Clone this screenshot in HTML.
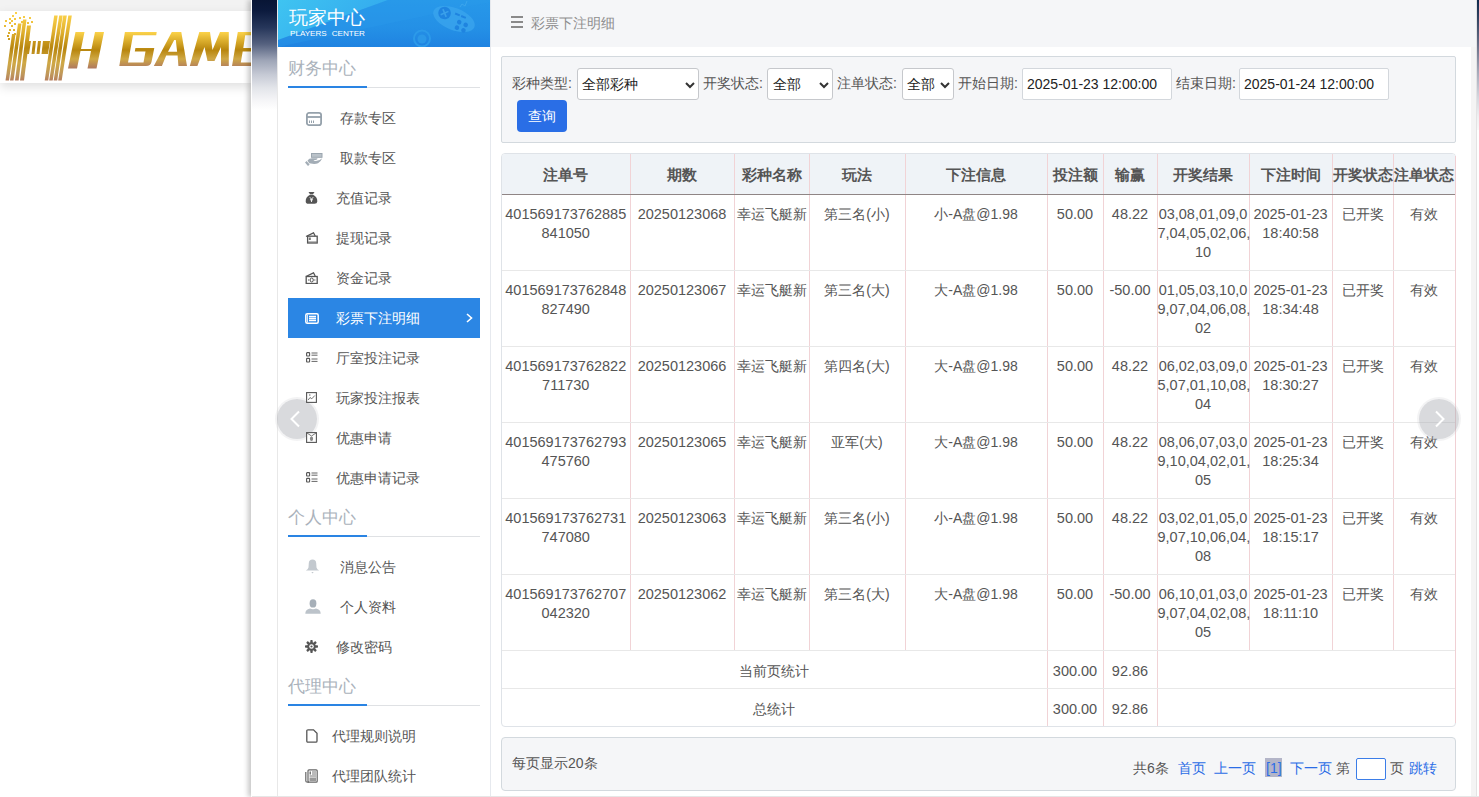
<!DOCTYPE html>
<html><head><meta charset="utf-8">
<style>
*{box-sizing:border-box;margin:0;padding:0}
html,body{width:1479px;height:797px;overflow:hidden;background:#fff;font-family:"Liberation Sans",sans-serif;color:#555;font-size:14px}
.abs{position:absolute}
#topstrip{left:0;top:0;width:251px;height:11px;background:#f2f2f2}
#logobar{left:0;top:11px;width:251px;height:72px;background:#fff;box-shadow:0 4px 10px rgba(0,0,0,.13)}
#panel{left:251px;top:0;width:1228px;height:797px;background:#fff;box-shadow:-3px 0 5px rgba(0,0,0,.22)}
#dark{left:252px;top:0;width:25px;height:110px;background:linear-gradient(#081535 0%,#0c1b3e 10%,#26365a 25%,#55617f 40%,#9ea5b7 55%,#c6cad5 68%,#e3e5ea 80%,#f6f6f8 92%,#fff 100%)}
#vline{left:277px;top:0;width:1px;height:797px;background:#e8e8e8}
#sidebar{left:278px;top:0;width:213px;height:797px;background:#fff;border-right:1px solid #e6e9ee}
#sbhead{left:278px;top:0;width:212px;height:47px;background:linear-gradient(90deg,#36b4ee 0%,#2a98e8 40%,#2690e6 70%,#2489e4 100%);overflow:hidden}
#sbhead .t1{position:absolute;left:11px;top:7px;color:#fff;font-size:19px;line-height:22px}
#sbhead .t2{position:absolute;left:12px;top:29px;color:#fff;font-size:8.1px;line-height:9px;word-spacing:2.7px}
.sec{position:absolute;left:288px;width:192px;height:2px}
.sec .tt{position:absolute;left:0;bottom:9px;font-size:17px;line-height:20px;color:#aab2bb;white-space:nowrap}
.sec .ul{position:absolute;left:0;top:0;width:79px;height:2px;background:#2a84e3}
.sec .gl{position:absolute;left:79px;top:1px;width:113px;height:1px;background:#dfe1e4}
.item{position:absolute;left:288px;width:192px;height:40px;line-height:40px;font-size:14px;color:#555}
.item svg{position:absolute}
.item .tx{position:absolute;top:0;white-space:nowrap}
.item.on{background:#2b86e4;color:#fff}
#mhead{left:491px;top:0;width:985px;height:47px;background:#f5f6f8}
#gutter{left:1471px;top:47px;width:5px;height:750px;background:#f4f4f4}
#rline{left:1476px;top:0;width:1px;height:797px;background:#e3e3e3}
#rdark{left:1477px;top:0;width:2px;height:130px;background:linear-gradient(#0e2a4e 0%,#2c3f5e 12%,#6a7088 35%,#a5a8b8 55%,#d5d6de 75%,#f0f0f2 90%,#f8f8f8 100%)}
#botline{left:252px;top:796px;width:1227px;height:1px;background:#e6e6e6}
#filter{left:501px;top:56px;width:955px;height:87px;background:#f5f6f8;border:1px solid #d3d9de;border-radius:2px}
.lbl{position:absolute;font-size:14px;color:#555;line-height:20px;top:73px;white-space:nowrap}
.sel{position:absolute;top:68px;height:32px;background:#fff;border:1px solid #c6c8cc;border-radius:3px;font-size:14px;color:#222;line-height:30px;padding-left:4px}
.sel svg{position:absolute;top:12px}
.inp{position:absolute;top:68px;height:32px;background:#fff;border:1px solid #d3d7dc;border-radius:2px;font-size:14px;color:#222;line-height:30px;padding-left:4px}
#btn{left:517px;top:100px;width:50px;height:32px;background:#2a6ee6;border-radius:4px;color:#fff;font-size:14px;line-height:32px;text-align:center}
#tbl{left:501px;top:153px;width:955px;height:574px;border:1px solid #dfe3e8;border-radius:4px;overflow:hidden}
table{border-collapse:collapse;table-layout:fixed;width:953px}
th{height:40px;background:#eff3f7;font-weight:bold;font-size:15px;color:#555;border-right:1px solid #f1d3d6;border-bottom:1px solid #8f8585;text-align:center;white-space:nowrap;padding:3px 0 0 0}
td{height:76px;vertical-align:top;text-align:center;font-size:14.5px;color:#555;line-height:19px;padding:10px 0 0 0;border-right:1px solid #f1d3d6;border-bottom:1px solid #e8e8e8;white-space:nowrap}
td .c{font-size:14px}
th:last-child,td:last-child{border-right:none}
tr.sum td{height:38px;line-height:20px;padding:3px 0 0 0;vertical-align:middle}
#foot{left:501px;top:737px;width:955px;height:54px;background:#f5f6f8;border:1px solid #d3d9de;border-radius:4px}
.circ{position:absolute;width:40px;height:40px;border-radius:50%;background:rgba(165,167,174,.42);box-shadow:0 0 0 2px rgba(200,200,206,.22)}
.pg{position:absolute;top:758px;font-size:14px;line-height:20px;white-space:nowrap;color:#555}
.pg.b{color:#2b6de6}
</style></head>
<body>
<div id="topstrip" class="abs"></div>
<div id="logobar" class="abs">
<svg width="251" height="72" viewBox="0 11 251 72" style="position:absolute;left:0;top:0">
<defs>
<linearGradient id="gold" gradientUnits="userSpaceOnUse" x1="0" y1="14" x2="0" y2="82">
<stop offset="0" stop-color="#fbd24a"/><stop offset="0.25" stop-color="#e2b230"/><stop offset="0.5" stop-color="#b8860e"/><stop offset="0.72" stop-color="#cfa845"/><stop offset="0.88" stop-color="#c0985a"/><stop offset="1" stop-color="#b47a5e"/>
</linearGradient>
<linearGradient id="gold2" gradientUnits="userSpaceOnUse" x1="0" y1="32" x2="0" y2="68">
<stop offset="0" stop-color="#fcd34a"/><stop offset="0.5" stop-color="#b8860e"/><stop offset="0.75" stop-color="#cfa845"/><stop offset="1" stop-color="#b07a5e"/>
</linearGradient>
</defs>
<g fill="url(#gold)">
<polygon points="5.5,80.5 9,80.5 15.5,34 12,34"/>
<polygon points="10,80.5 13.5,80.5 21.5,23.5 18,23.5"/>
<polygon points="15,80.5 18.6,80.5 26.5,19.5 23,19.5"/>
<polygon points="20,80.5 24,80.5 31,25.5 27,25.5"/>
<polygon points="44.7,80.5 48.2,80.5 57.7,15.5 54.2,15.5"/>
<polygon points="49.2,80.5 52.7,80.5 62.7,15.5 59.2,15.5"/>
<polygon points="53.7,80.5 57.2,80.5 66.8,15.5 63.2,15.5"/>
<polygon points="58.2,80.5 61.7,80.5 71.8,15.5 68.3,15.5"/>
<polygon points="27,41 31,41 29,54 25,54"/>
<polygon points="33,41 36,41 34.5,54 31.5,54"/>
<polygon points="38,41 41,41 39.5,54 36.5,54"/>
<polygon points="43,41 50,41 48,54 41.5,54"/>
<rect x="15" y="12" width="2" height="2"/><rect x="12" y="15" width="2" height="2"/><rect x="9" y="18" width="2" height="2"/><rect x="14" y="18" width="2" height="2"/><rect x="5" y="20" width="2" height="2"/><rect x="11" y="20" width="2" height="2"/><rect x="19" y="17" width="2" height="2"/><rect x="23" y="16" width="2" height="2"/><rect x="29" y="17" width="2" height="2"/><rect x="31" y="21" width="2" height="2"/><rect x="9" y="22" width="2" height="2"/><rect x="14" y="23" width="2" height="2"/><rect x="4" y="25" width="2" height="2"/><rect x="11" y="25" width="2" height="2"/><rect x="9" y="29" width="2" height="2"/><rect x="13" y="29" width="2" height="2"/><rect x="8" y="32" width="2" height="2"/><rect x="14" y="33" width="2" height="2"/><rect x="7" y="35" width="2" height="2"/><rect x="8" y="38" width="2" height="2"/><rect x="27" y="22" width="2" height="2"/><rect x="21" y="21" width="2" height="2"/>
</g>
<g fill="url(#gold2)">
<polygon points="68,68.5 77,68.5 80.5,51 91,51 87.5,68.5 96.5,68.5 104,32 95,32 91.5,49 81,49 84.5,32 75.5,32"/>
<path fill-rule="evenodd" d="M124.9 32 L156.7 32 L156.2 35.3 L133 35.3 L128 62.6 L143.5 62.6 L145.5 51.4 L134.8 51.4 L135.4 47.9 L154.3 47.9 L151.6 61.5 Q150.8 66 146 66 L119.3 66 Z
M153.8 66 L171.8 32 L181.3 32 L187 66 L178.4 66 L177.6 55.5 L166.2 55.5 L161.9 66 Z M168 51.7 L177.1 51.7 L175.8 40 L174.2 40 Z
M189.8 66 L199.3 32 L210 32 L212.5 50 L220 32 L228.8 32 L228.8 66 L221 66 L221 47 L214.5 61 L207.5 61 L204.5 47 L197.4 66 Z
M232 66 L237.8 32 L252 32 L252 35.3 L245.2 35.3 L243.3 47.9 L252 47.9 L252 51.4 L242.7 51.4 L240.8 62.6 L252 62.6 L252 66 Z"/>
</g>
</svg>
</div>
<div id="panel" class="abs"></div>
<div id="dark" class="abs"></div>
<div id="vline" class="abs"></div>
<div id="sidebar" class="abs"></div>
<div id="sbhead" class="abs">
<svg width="212" height="47" style="position:absolute;left:0;top:0">
<defs>
<linearGradient id="hb" x1="0" y1="0" x2="0" y2="1"><stop offset="0" stop-color="#2798e9"/><stop offset="0.6" stop-color="#2490e6"/><stop offset="1" stop-color="#1f83e1"/></linearGradient>
<linearGradient id="shine" x1="0" y1="0" x2="1" y2="0.4"><stop offset="0" stop-color="#3fc4f1"/><stop offset="1" stop-color="#33a9ee"/></linearGradient>
</defs>
<rect width="212" height="47" fill="url(#hb)"/>
<polygon points="0,0 110,0 0,40" fill="url(#shine)"/>
<polygon points="0,40 110,0 212,0 212,2 0,47" fill="#2a9aea" opacity="0.35"/>
<g transform="rotate(22 176 19)">
<ellipse cx="176" cy="19" rx="22" ry="11" fill="#3ba6ed" opacity="0.75"/>
<circle cx="165" cy="17" r="6.3" fill="#1f84e0"/>
<path d="M162 14L168 20M168 14L162 20" stroke="#3aa0ea" stroke-width="1.6"/>
<path d="M175 13.5h5M181.5 13.5h5" stroke="#1f84e0" stroke-width="2"/>
<circle cx="182" cy="20" r="2.3" fill="#1f84e0"/><circle cx="189" cy="20" r="2.3" fill="#1f84e0"/>
<circle cx="182" cy="26" r="2.3" fill="#1f84e0"/><circle cx="189" cy="26" r="2.3" fill="#1f84e0"/>
</g>
<path d="M182 7 L184 4 L187 6 L189 1" fill="none" stroke="#3ba6ed" stroke-width="1"/>
<circle cx="144" cy="38.5" r="8" fill="none" stroke="#2c9ae9" stroke-width="2"/>
<circle cx="144" cy="39" r="4.5" fill="#2b98e8"/>
</svg>
<div class="t1">玩家中心</div><div class="t2">PLAYERS CENTER</div></div>
<div class="circ" style="left:277px;top:399px"></div>
<div class="sec" style="top:86px"><div class="tt">财务中心</div><div class="ul"></div><div class="gl"></div></div>
<div class="item" style="top:98px"><svg style="left:18px;top:14px" width="16" height="14" viewBox="0 0 16 14"><rect x="0.9" y="0.9" width="14.2" height="12.2" rx="2.2" fill="none" stroke="#95a1ab" stroke-width="1.8"/><line x1="1" y1="5" x2="15" y2="5" stroke="#95a1ab" stroke-width="1.8"/><path d="M3.5 8.5v2.5M5.5 8.5v2.5M7.5 8.5v2.5" stroke="#95a1ab" stroke-width="1"/></svg><span class="tx" style="left:52px">存款专区</span></div>
<div class="item" style="top:138px"><svg style="left:17px;top:15px" width="18" height="13" viewBox="0 0 18 13"><rect x="6.5" y="0.5" width="10.5" height="3.8" fill="#bac2c9" stroke="#9ba6af" stroke-width="1"/><path d="M2.5 7.5 Q4 5.2 7 5.2 H12.5 Q12.5 6.8 10.5 7 H8.5 Q9 8.2 11 8.1 Q14.5 7.8 17.2 5.2 Q16 8.6 13 10.2 Q10.5 11.2 7.5 10.8 L4.2 10.2 Z" fill="#a3adb6"/><path d="M0.8 8.8 L3.8 12.3" stroke="#a3adb6" stroke-width="2.2"/></svg><span class="tx" style="left:52px">取款专区</span></div>
<div class="item" style="top:178px"><svg style="left:17px;top:13px" width="13" height="13" viewBox="0 0 13 13"><path d="M3.5 1 L9.5 1 L8 3.2 L5 3.2 Z" fill="#555"/><path d="M5 3.8 H8 Q12.5 6 12.3 10.5 Q12.2 12.8 9.5 12.8 H3.5 Q0.8 12.8 0.7 10.5 Q0.5 6 5 3.8Z" fill="#555"/><path d="M4.8 6.2 L6.5 8.2 L8.2 6.2 M6.5 8.2 V11 M5 8.8 H8" stroke="#fff" stroke-width="0.9" fill="none"/></svg><span class="tx" style="left:48px">充值记录</span></div>
<div class="item" style="top:218px"><svg style="left:17px;top:14px" width="13" height="12" viewBox="0 0 13 12"><path d="M1 4.5 L8.5 0.8 L10.2 4" fill="none" stroke="#555" stroke-width="1.3"/><rect x="2.6" y="4.2" width="9.6" height="6.8" fill="none" stroke="#555" stroke-width="1.3"/><rect x="3.8" y="5.5" width="2" height="2.5" fill="#777"/><line x1="3" y1="10" x2="12" y2="10" stroke="#777" stroke-width="1"/></svg><span class="tx" style="left:48px">提现记录</span></div>
<div class="item" style="top:258px"><svg style="left:17px;top:14px" width="13" height="12" viewBox="0 0 13 12"><path d="M1 4.5 L8.5 0.8 L10.2 4" fill="none" stroke="#555" stroke-width="1.3"/><rect x="1.2" y="4.5" width="11" height="7" fill="none" stroke="#555" stroke-width="1.3"/><ellipse cx="6.7" cy="8" rx="1.6" ry="2" fill="none" stroke="#555" stroke-width="1"/><path d="M3 8h1.2M9.2 8h1.2" stroke="#555" stroke-width="1"/></svg><span class="tx" style="left:48px">资金记录</span></div>
<div class="item on" style="top:298px"><svg style="left:17px;top:15px" width="14" height="11" viewBox="0 0 14 11"><rect x="0.8" y="0.8" width="12.4" height="9.4" rx="1.5" fill="none" stroke="#fff" stroke-width="1.5"/><path d="M4 3.5H11M4 5.5H11M4 7.5H11" stroke="#fff" stroke-width="1.3"/><path d="M2.5 1.5V9.5" stroke="#fff" stroke-width="0.8"/></svg><span class="tx" style="left:48px">彩票下注明细</span><svg style="left:178px;top:15px" width="7" height="10" viewBox="0 0 7 10"><path d="M1 1 L5.5 5 L1 9" fill="none" stroke="#fff" stroke-width="1.6"/></svg></div>
<div class="item" style="top:338px"><svg style="left:18px;top:14px" width="12" height="11" viewBox="0 0 12 11"><rect x="0.6" y="0.6" width="3" height="3.4" rx="0.6" fill="none" stroke="#555" stroke-width="1.1"/><rect x="0.6" y="6.4" width="3" height="3.6" rx="0.6" fill="none" stroke="#555" stroke-width="1.1"/><path d="M5.5 1H11.5M5.5 3.2H11.5M5.5 7H11.5M5.5 9.4H11.5" stroke="#666" stroke-width="1"/></svg><span class="tx" style="left:48px">厅室投注记录</span></div>
<div class="item" style="top:378px"><svg style="left:18px;top:14px" width="11" height="11" viewBox="0 0 11 11"><rect x="0.6" y="0.6" width="9.8" height="9.8" fill="#fff" stroke="#555" stroke-width="1.1"/><path d="M2.2 8 L4 5.5 L5.8 6.8 L8.8 3.5" fill="none" stroke="#666" stroke-width="0.9"/><circle cx="3.8" cy="3" r="0.8" fill="#777"/></svg><span class="tx" style="left:48px">玩家投注报表</span></div>
<div class="item" style="top:418px"><svg style="left:18px;top:14px" width="11" height="11" viewBox="0 0 11 11"><rect x="0.6" y="0.6" width="9.8" height="9.8" fill="#fff" stroke="#555" stroke-width="1.1"/><path d="M1 1 L5.5 4 L10 1" fill="none" stroke="#666" stroke-width="0.9"/><ellipse cx="5.5" cy="6.8" rx="1.6" ry="2.2" fill="#888"/></svg><span class="tx" style="left:48px">优惠申请</span></div>
<div class="item" style="top:458px"><svg style="left:18px;top:14px" width="12" height="11" viewBox="0 0 12 11"><rect x="0.6" y="0.6" width="3" height="3.4" rx="0.6" fill="none" stroke="#555" stroke-width="1.1"/><rect x="0.6" y="6.4" width="3" height="3.6" rx="0.6" fill="none" stroke="#555" stroke-width="1.1"/><path d="M5.5 1H11.5M5.5 3.2H11.5M5.5 7H11.5M5.5 9.4H11.5" stroke="#666" stroke-width="1"/></svg><span class="tx" style="left:48px">优惠申请记录</span></div>
<div class="sec" style="top:535px"><div class="tt">个人中心</div><div class="ul"></div><div class="gl"></div></div>
<div class="item" style="top:547px"><svg style="left:17px;top:12px" width="15" height="15" viewBox="0 0 15 15"><path d="M7.5 0.5 Q4 0.5 3.8 4 L3.5 8.5 Q3 10.5 0.8 11.5 H14.2 Q12 10.5 11.5 8.5 L11.2 4 Q11 0.5 7.5 0.5Z" fill="#c3c9cf"/><path d="M6.3 13 H8.7 L7.5 14.5Z" fill="#c3c9cf"/></svg><span class="tx" style="left:52px">消息公告</span></div>
<div class="item" style="top:587px"><svg style="left:17px;top:12px" width="16" height="15" viewBox="0 0 16 15"><ellipse cx="8" cy="4.4" rx="3.4" ry="4.2" fill="#a6afb8"/><path d="M0.3 14.8 Q0.3 10.5 5 9.6 Q8 10.8 11 9.6 Q15.7 10.5 15.7 14.8Z" fill="#bcc3ca"/></svg><span class="tx" style="left:52px">个人资料</span></div>
<div class="item" style="top:627px"><svg style="left:17px;top:13px" width="13" height="13" viewBox="0 0 13 13"><g fill="#555"><circle cx="6.5" cy="6.5" r="4.3"/><rect x="5.3" y="0" width="2.4" height="13" rx="0.8"/><rect x="0" y="5.3" width="13" height="2.4" rx="0.8"/><rect x="5.3" y="0" width="2.4" height="13" rx="0.8" transform="rotate(45 6.5 6.5)"/><rect x="5.3" y="0" width="2.4" height="13" rx="0.8" transform="rotate(-45 6.5 6.5)"/></g><circle cx="6.5" cy="6.5" r="2.3" fill="#fff"/><circle cx="6.5" cy="6.5" r="1.1" fill="#555"/></svg><span class="tx" style="left:48px">修改密码</span></div>
<div class="sec" style="top:704px"><div class="tt">代理中心</div><div class="ul"></div><div class="gl"></div></div>
<div class="item" style="top:716px"><svg style="left:18px;top:13px" width="12" height="14" viewBox="0 0 12 14"><path d="M2 0.8 H7.5 L11 4.3 V12 Q11 13.2 9.8 13.2 H2.2 Q0.8 13.2 0.8 12 V2 Q0.8 0.8 2 0.8Z" fill="none" stroke="#555" stroke-width="1.3"/></svg><span class="tx" style="left:44px">代理规则说明</span></div>
<div class="item" style="top:756px"><svg style="left:17px;top:13px" width="13" height="14" viewBox="0 0 13 14"><rect x="3" y="0.8" width="9.2" height="12.4" rx="1" fill="#fff" stroke="#666" stroke-width="1.2"/><path d="M0.8 3 V12 Q0.8 13.2 2.5 13.2 H4" fill="none" stroke="#666" stroke-width="1.2"/><rect x="4.5" y="2.5" width="1.5" height="3" fill="#777"/><path d="M7 3H11M7 5H11M4.5 7H11" stroke="#777" stroke-width="1"/><rect x="4.5" y="8.5" width="6.5" height="3.5" fill="#999"/></svg><span class="tx" style="left:44px">代理团队统计</span></div>
<svg class="abs" style="left:289px;top:410px" width="12" height="18" viewBox="0 0 12 18"><path d="M10 1.5 L2.5 9 L10 16.5" fill="none" stroke="#fff" stroke-width="2"/></svg>
<div id="mhead" class="abs"></div>
<div id="gutter" class="abs"></div>
<div id="rline" class="abs"></div>
<div id="rdark" class="abs"></div>
<div id="botline" class="abs"></div>
<svg class="abs" style="left:511px;top:16px" width="12" height="12" viewBox="0 0 12 12"><path d="M0 1H12M0 6H12M0 11H12" stroke="#8a8a8a" stroke-width="2"/></svg>
<div class="abs" style="left:531px;top:13px;font-size:14px;line-height:20px;color:#8e8e8e">彩票下注明细</div>

<div id="filter" class="abs"></div>
<div class="lbl" style="left:512px">彩种类型:</div>
<div class="sel" style="left:577px;width:122px;padding-left:4px">全部彩种<svg style="left:107px;top:13px" width="10" height="7" viewBox="0 0 10 7"><path d="M1 1 L5 5 L9 1" fill="none" stroke="#333" stroke-width="2"/></svg></div>
<div class="lbl" style="left:703px">开奖状态:</div>
<div class="sel" style="left:767px;width:66px;padding-left:5px">全部<svg style="left:51px;top:13px" width="10" height="7" viewBox="0 0 10 7"><path d="M1 1 L5 5 L9 1" fill="none" stroke="#333" stroke-width="2"/></svg></div>
<div class="lbl" style="left:837px">注单状态:</div>
<div class="sel" style="left:902px;width:52px;padding-left:4px">全部<svg style="left:37px;top:13px" width="10" height="7" viewBox="0 0 10 7"><path d="M1 1 L5 5 L9 1" fill="none" stroke="#333" stroke-width="2"/></svg></div>
<div class="lbl" style="left:958px">开始日期:</div>
<div class="inp" style="left:1022px;width:150px">2025-01-23 12:00:00</div>
<div class="lbl" style="left:1176px">结束日期:</div>
<div class="inp" style="left:1239px;width:150px">2025-01-24 12:00:00</div>
<div id="btn" class="abs">查询</div>

<div id="tbl" class="abs">
<table>
<colgroup><col style="width:128px"><col style="width:104px"><col style="width:75px"><col style="width:96px"><col style="width:142px"><col style="width:56px"><col style="width:54px"><col style="width:92px"><col style="width:83px"><col style="width:61px"><col style="width:62px"></colgroup>
<tr><th>注单号</th><th>期数</th><th>彩种名称</th><th>玩法</th><th>下注信息</th><th>投注额</th><th>输赢</th><th>开奖结果</th><th>下注时间</th><th>开奖状态</th><th>注单状态</th></tr>
<tr><td>401569173762885<br>841050</td><td>20250123068</td><td><span class="c">幸运飞艇新</span></td><td><span class="c">第三名(小)</span></td><td><span class="c">小-A盘@1.98</span></td><td>50.00</td><td>48.22</td><td>03,08,01,09,0<br>7,04,05,02,06,<br>10</td><td>2025-01-23<br>18:40:58</td><td><span class="c">已开奖</span></td><td><span class="c">有效</span></td></tr>
<tr><td>401569173762848<br>827490</td><td>20250123067</td><td><span class="c">幸运飞艇新</span></td><td><span class="c">第三名(大)</span></td><td><span class="c">大-A盘@1.98</span></td><td>50.00</td><td>-50.00</td><td>01,05,03,10,0<br>9,07,04,06,08,<br>02</td><td>2025-01-23<br>18:34:48</td><td><span class="c">已开奖</span></td><td><span class="c">有效</span></td></tr>
<tr><td>401569173762822<br>711730</td><td>20250123066</td><td><span class="c">幸运飞艇新</span></td><td><span class="c">第四名(大)</span></td><td><span class="c">大-A盘@1.98</span></td><td>50.00</td><td>48.22</td><td>06,02,03,09,0<br>5,07,01,10,08,<br>04</td><td>2025-01-23<br>18:30:27</td><td><span class="c">已开奖</span></td><td><span class="c">有效</span></td></tr>
<tr><td>401569173762793<br>475760</td><td>20250123065</td><td><span class="c">幸运飞艇新</span></td><td><span class="c">亚军(大)</span></td><td><span class="c">大-A盘@1.98</span></td><td>50.00</td><td>48.22</td><td>08,06,07,03,0<br>9,10,04,02,01,<br>05</td><td>2025-01-23<br>18:25:34</td><td><span class="c">已开奖</span></td><td><span class="c">有效</span></td></tr>
<tr><td>401569173762731<br>747080</td><td>20250123063</td><td><span class="c">幸运飞艇新</span></td><td><span class="c">第三名(小)</span></td><td><span class="c">小-A盘@1.98</span></td><td>50.00</td><td>48.22</td><td>03,02,01,05,0<br>9,07,10,06,04,<br>08</td><td>2025-01-23<br>18:15:17</td><td><span class="c">已开奖</span></td><td><span class="c">有效</span></td></tr>
<tr><td>401569173762707<br>042320</td><td>20250123062</td><td><span class="c">幸运飞艇新</span></td><td><span class="c">第三名(大)</span></td><td><span class="c">大-A盘@1.98</span></td><td>50.00</td><td>-50.00</td><td>06,10,01,03,0<br>9,07,04,02,08,<br>05</td><td>2025-01-23<br>18:11:10</td><td><span class="c">已开奖</span></td><td><span class="c">有效</span></td></tr>
<tr class="sum"><td colspan="5"><span class="c">当前页统计</span></td><td>300.00</td><td>92.86</td><td colspan="4"></td></tr>
<tr class="sum"><td colspan="5" style="border-bottom:none"><span class="c">总统计</span></td><td style="border-bottom:none">300.00</td><td style="border-bottom:none">92.86</td><td colspan="4" style="border-bottom:none"></td></tr>
</table>
</div>

<div class="abs" style="left:1455px;top:156px;width:1px;height:567px;background:#f0d0d4"></div>
<div id="foot" class="abs"></div>
<div class="abs" style="left:512px;top:753px;font-size:14px;line-height:20px;color:#555">每页显示20条</div>
<div class="pg" style="left:1133px">共6条</div>
<div class="pg b" style="left:1178px">首页</div>
<div class="pg b" style="left:1214px">上一页</div>
<div class="abs" style="left:1265px;top:758px;width:17px;height:19px;background:#b3b5c8"></div>
<div class="pg b" style="left:1266px">[1]</div>
<div class="pg b" style="left:1290px">下一页</div>
<div class="pg" style="left:1336px">第</div>
<div class="abs" style="left:1356px;top:758px;width:30px;height:22px;border:1px solid #3b7de8;border-radius:2px;background:#fff"></div>
<div class="pg" style="left:1390px">页</div>
<div class="pg b" style="left:1409px">跳转</div>

<div class="circ" style="left:1419px;top:399px"></div>
<svg class="abs" style="left:1434px;top:410px" width="12" height="18" viewBox="0 0 12 18"><path d="M2 1.5 L9.5 9 L2 16.5" fill="none" stroke="#fff" stroke-width="2"/></svg>
</body></html>
